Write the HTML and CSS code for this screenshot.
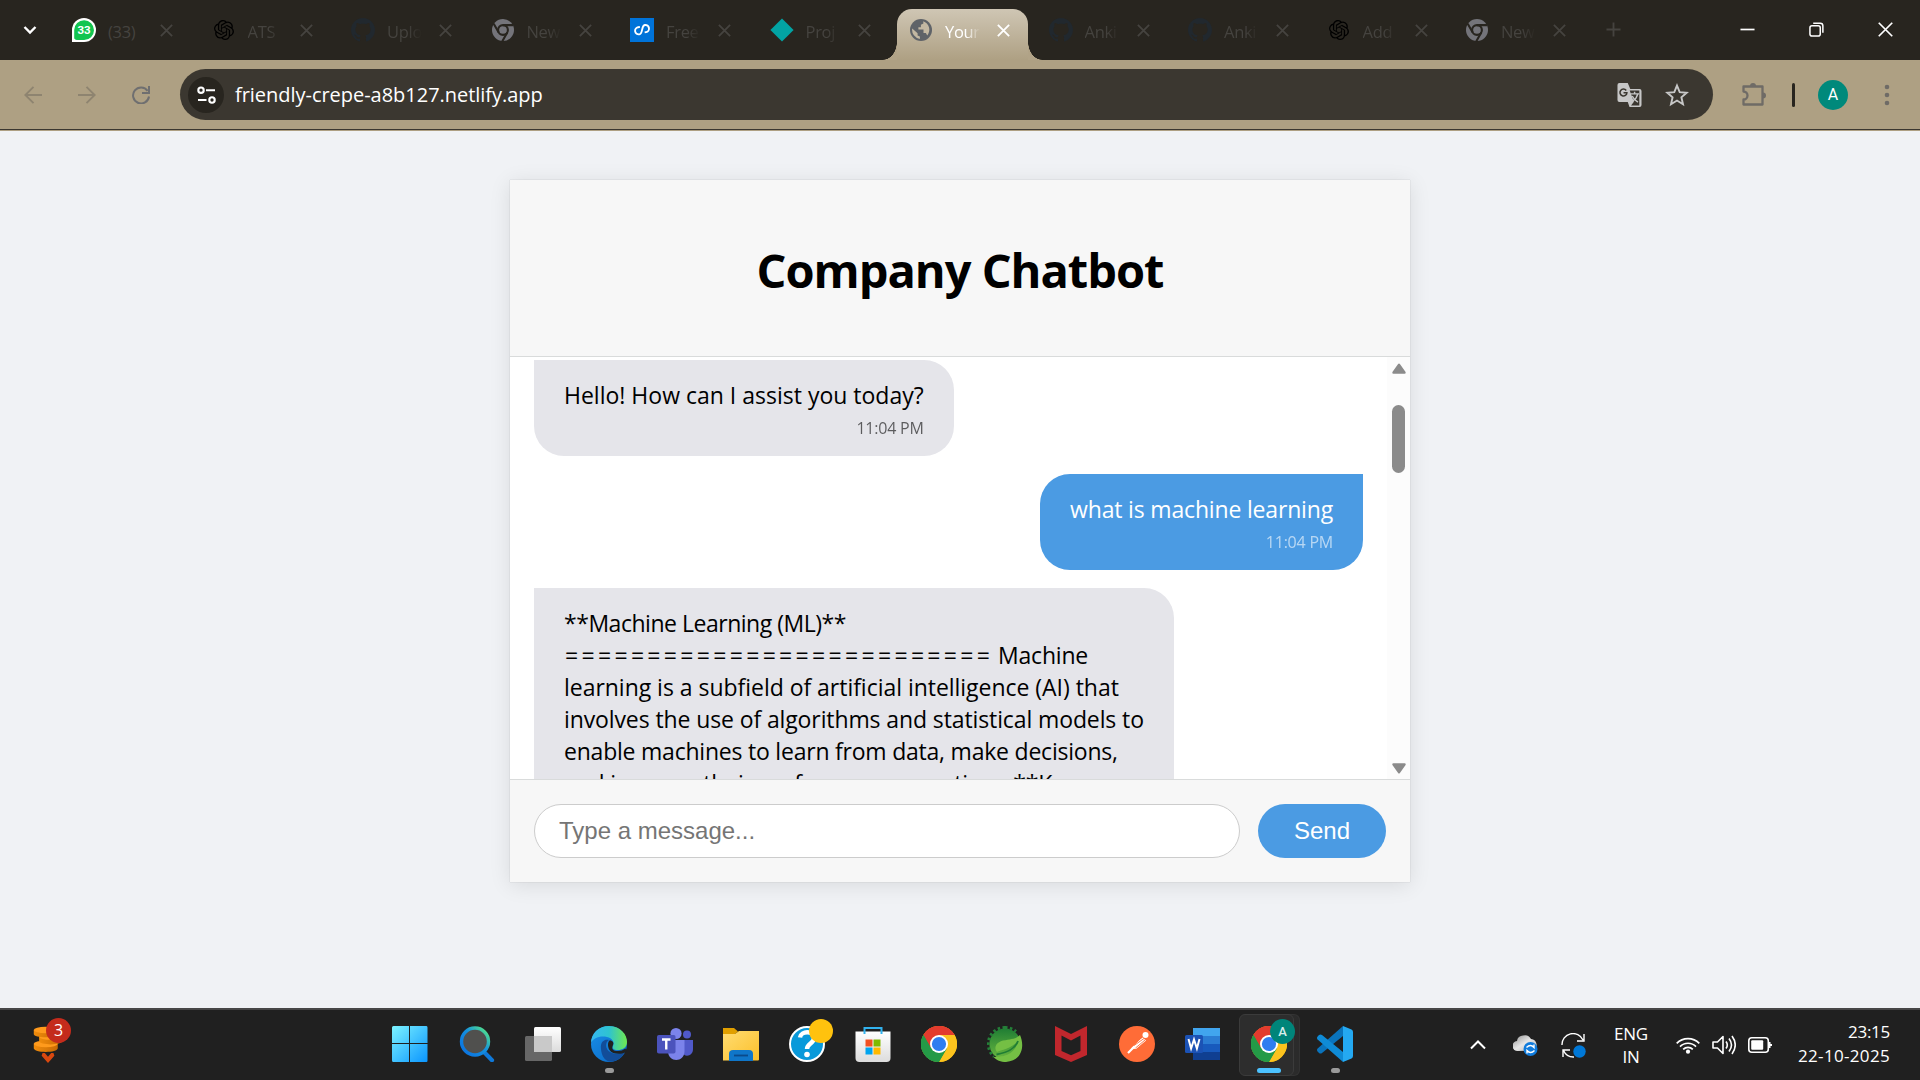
FILE: index.html
```html
<!DOCTYPE html>
<html lang="en">
<head>
<meta charset="utf-8">
<title>Your Chatbot</title>
<link rel="stylesheet" href="styles.css">
</head>
<body>
<svg class="defs" aria-hidden="true">
  <defs>
    <symbol id="x" viewBox="0 0 12 12"><path d="M.8.8l10.4 10.4M11.2.8L.8 11.2" fill="none" stroke="currentColor" stroke-width="1.7"/></symbol>
    <symbol id="openai" viewBox="0 0 24 24"><path d="M22.2819 9.8211a5.9847 5.9847 0 0 0-.5157-4.9108 6.0462 6.0462 0 0 0-6.5098-2.9A6.0651 6.0651 0 0 0 4.9807 4.1818a5.9847 5.9847 0 0 0-3.9977 2.9 6.0462 6.0462 0 0 0 .7427 7.0966 5.98 5.98 0 0 0 .511 4.9107 6.051 6.051 0 0 0 6.5146 2.9001A5.9847 5.9847 0 0 0 13.2599 24a6.0557 6.0557 0 0 0 5.7718-4.2058 5.9894 5.9894 0 0 0 3.9977-2.9001 6.0557 6.0557 0 0 0-.7475-7.0729zm-9.022 12.6081a4.4755 4.4755 0 0 1-2.8764-1.0408l.1419-.0804 4.7783-2.7582a.7948.7948 0 0 0 .3927-.6813v-6.7369l2.02 1.1686a.071.071 0 0 1 .038.052v5.5826a4.504 4.504 0 0 1-4.4945 4.4944zm-9.6607-4.1254a4.4708 4.4708 0 0 1-.5346-3.0137l.142.0852 4.783 2.7582a.7712.7712 0 0 0 .7806 0l5.8428-3.3685v2.3324a.0804.0804 0 0 1-.0332.0615L9.74 19.9502a4.4992 4.4992 0 0 1-6.1408-1.6464zM2.3408 7.8956a4.485 4.485 0 0 1 2.3655-1.9728V11.6a.7664.7664 0 0 0 .3879.6765l5.8144 3.3543-2.0201 1.1685a.0757.0757 0 0 1-.071 0l-4.8303-2.7865A4.504 4.504 0 0 1 2.3408 7.872zm16.5963 3.8558L13.1038 8.364 15.1192 7.2a.0757.0757 0 0 1 .071 0l4.8303 2.7913a4.4944 4.4944 0 0 1-.6765 8.1042v-5.6772a.79.79 0 0 0-.407-.667zm2.0107-3.0231l-.142-.0852-4.7735-2.7818a.7759.7759 0 0 0-.7854 0L9.409 9.2297V6.8974a.0662.0662 0 0 1 .0284-.0615l4.8303-2.7866a4.4992 4.4992 0 0 1 6.6802 4.66zM8.3065 12.863l-2.02-1.1638a.0804.0804 0 0 1-.038-.0567V6.0742a4.4992 4.4992 0 0 1 7.3757-3.4537l-.142.0805L8.704 5.459a.7948.7948 0 0 0-.3927.6813zm1.0976-2.3654l2.602-1.4998 2.6069 1.4998v2.9994l-2.5974 1.4997-2.6067-1.4997Z" fill="#000"/></symbol>
    <symbol id="github" viewBox="0 0 16 16"><path d="M8 0C3.58 0 0 3.58 0 8c0 3.54 2.29 6.53 5.47 7.59.4.07.55-.17.55-.38 0-.19-.01-.82-.01-1.49-2.01.37-2.53-.49-2.69-.94-.09-.23-.48-.94-.82-1.13-.28-.15-.68-.52-.01-.53.63-.01 1.08.58 1.23.82.72 1.21 1.87.87 2.33.66.07-.52.28-.87.51-1.07-1.78-.2-3.64-.89-3.64-3.95 0-.87.31-1.59.82-2.15-.08-.2-.36-1.02.08-2.12 0 0 .67-.21 2.2.82.64-.18 1.32-.27 2-.27s1.36.09 2 .27c1.53-1.04 2.2-.82 2.2-.82.44 1.1.16 1.92.08 2.12.51.56.82 1.27.82 2.15 0 3.07-1.87 3.75-3.65 3.95.29.25.54.73.54 1.48 0 1.07-.01 1.93-.01 2.2 0 .21.15.46.55.38A8.01 8.01 0 0 0 16 8c0-4.42-3.58-8-8-8z" fill="#21282e"/></symbol>
    <symbol id="chrome-gray" viewBox="0 0 24 24"><circle cx="12" cy="12" r="11" fill="#74747a"/><circle cx="12" cy="12" r="4.9" fill="none" stroke="#28251f" stroke-width="2.1"/><path d="M12 7.1h10M7.7 14.5L2.7 5.8M16.3 14.5l-5 8.8" stroke="#28251f" stroke-width="2.1"/></symbol>
    <symbol id="chrome" viewBox="0 0 36 36"><circle cx="18" cy="18" r="18" fill="#fbbc05"/><path d="M18 18L2.4 9A18 18 0 0 1 33.6 9z" fill="#e33b2e"/><path d="M18 18L2.4 9a18 18 0 0 0 15.6 27l7.8-13.5z" fill="#249a47"/><path d="M18 9h15.6A18 18 0 0 1 18 36l7.8-13.5z" fill="#fcc31e"/><path d="M2.4 9A18 18 0 0 1 33.6 9H18l-7.8 13.5z" fill="#e33b2e"/><path d="M2.4 9l7.8 13.5L18 27l7.8-4.5L18 36A18 18 0 0 1 2.4 9z" fill="#249a47"/><circle cx="18" cy="18" r="9" fill="#fff"/><circle cx="18" cy="18" r="7.1" fill="#2f7df0"/></symbol>
    <linearGradient id="win" x2="1" y2="1"><stop stop-color="#7cf3ff"/><stop offset="1" stop-color="#0a95ff"/></linearGradient>
    <linearGradient id="lens" x1="0" y1="1" x2="1" y2="0"><stop stop-color="#0a6fe0"/><stop offset=".55" stop-color="#1490df"/><stop offset="1" stop-color="#5df07a"/></linearGradient>
    <linearGradient id="edgeTop"><stop stop-color="#35b8f2"/><stop offset=".5" stop-color="#2ec3d0"/><stop offset="1" stop-color="#6fe84f"/></linearGradient>
    <linearGradient id="edgeLow" x2="1" y2="1"><stop stop-color="#1a8fe8"/><stop offset="1" stop-color="#0867c4"/></linearGradient>
    <linearGradient id="folder" x2="1" y2="1"><stop stop-color="#ffdc72"/><stop offset="1" stop-color="#fcc02a"/></linearGradient>
    <linearGradient id="paper" x2="0" y2="1"><stop stop-color="#fff"/><stop offset="1" stop-color="#dcdcdc"/></linearGradient>
    <linearGradient id="leaf" x2="0" y2="1"><stop stop-color="#1f7d34"/><stop offset="1" stop-color="#6bb83f"/></linearGradient>
    <linearGradient id="coin"><stop stop-color="#f08c0c"/><stop offset="1" stop-color="#c76a04"/></linearGradient>
    <linearGradient id="cloud" x2="1" y2="1"><stop stop-color="#8f8f8f"/><stop offset=".5" stop-color="#e6e6e6"/><stop offset="1" stop-color="#b0b0b0"/></linearGradient>
  </defs>
</svg>

<header class="tabstrip">
  <svg class="tab-search" viewBox="0 0 14 10"><path d="M1.5 2L7 7.5 12.5 2" fill="none" stroke="#fff" stroke-width="2.4"/></svg>
  <div class="tabs">
    <div class="tab"><svg class="fav" viewBox="0 0 24 24"><path d="M0 24V12A12 12 0 1 1 12 24z" fill="#fff"/><path d="M2.2 21.8V12A9.9 9.9 0 1 1 12 22H6z" fill="#12c550"/><path d="M0 24l1-4.5 4 3.4z" fill="#fff"/><text x="12" y="16.2" text-anchor="middle" class="fav-count">33</text></svg><span class="tab-title">(33)</span><svg class="close"><use href="#x"/></svg></div>
    <div class="tab"><svg class="fav small"><use href="#openai"/></svg><span class="tab-title">ATS</span><svg class="close"><use href="#x"/></svg></div>
    <div class="tab"><svg class="fav"><use href="#github"/></svg><span class="tab-title">Uplo</span><svg class="close"><use href="#x"/></svg></div>
    <div class="tab"><svg class="fav"><use href="#chrome-gray"/></svg><span class="tab-title">New</span><svg class="close"><use href="#x"/></svg></div>
    <div class="tab"><svg class="fav" viewBox="0 0 24 24"><path d="M0 0h24v24H0z" fill="#0073d9"/><path d="M10.5 8.6H8.6a3.600 3.600 0 0 0 0 7.200c3.900 0 3.300-8.200 7-8.200a3.600 3.600 0 0 1 0 7.200h-1.400" fill="none" stroke="#fff" stroke-width="1.900" transform="rotate(-10 12 12)"/></svg><span class="tab-title">Free</span><svg class="close"><use href="#x"/></svg></div>
    <div class="tab"><svg class="fav" viewBox="0 0 24 24"><path d="M12 .4L23.6 12 12 23.6.4 12z" fill="#02a3a3"/></svg><span class="tab-title">Proj</span><svg class="close"><use href="#x"/></svg></div>
    <div class="tab active"><svg class="fav" viewBox="0 0 24 24"><circle cx="12" cy="12" r="11" fill="#5f6368"/><path d="M14.2 3.2l.2 2.3-2.5 1.3v2.4H9.4v2.3h5.1v3.4h2.4l1.3 2.6A9 9 0 0 0 14.2 3.2zM3.2 10.6l5.4 4.7v2.1l2.3 1.2v2.3a9 9 0 0 1-7.7-10.3z" fill="#c3b8a2"/></svg><span class="tab-title">Your</span><svg class="close"><use href="#x"/></svg></div>
    <div class="tab"><svg class="fav"><use href="#github"/></svg><span class="tab-title">Anki</span><svg class="close"><use href="#x"/></svg></div>
    <div class="tab"><svg class="fav"><use href="#github"/></svg><span class="tab-title">Anki</span><svg class="close"><use href="#x"/></svg></div>
    <div class="tab"><svg class="fav small"><use href="#openai"/></svg><span class="tab-title">Add</span><svg class="close"><use href="#x"/></svg></div>
    <div class="tab"><svg class="fav"><use href="#chrome-gray"/></svg><span class="tab-title">New</span><svg class="close"><use href="#x"/></svg></div>
  </div>
  <svg class="new-tab" viewBox="0 0 16 16"><path d="M8 .5v15M.5 8h15" stroke="#45433f" stroke-width="2"/></svg>
  <div class="window-controls">
    <svg viewBox="0 0 16 16"><path d="M.5 8h15" stroke="#fff" stroke-width="1.8"/></svg>
    <svg viewBox="0 0 16 16"><rect x="1" y="4" width="11" height="11" rx="2.2" fill="none" stroke="#fff" stroke-width="1.6"/><path d="M4.5 1.3H12a2.8 2.8 0 0 1 2.8 2.8v7.4" fill="none" stroke="#fff" stroke-width="1.6"/></svg>
    <svg viewBox="0 0 16 16"><path d="M.8.8l14.4 14.4M15.2.8L.8 15.2" stroke="#fff" stroke-width="1.8"/></svg>
  </div>
</header>

<nav class="toolbar">
  <div class="nav-buttons">
    <svg viewBox="0 0 18 18"><path d="M18 9H1.5M9.5.8L1.3 9l8.2 8.2" fill="none" stroke="#8e8470" stroke-width="1.9"/></svg>
    <svg viewBox="0 0 18 18"><path d="M0 9h16.5M8.5.8L16.7 9l-8.2 8.2" fill="none" stroke="#8e8470" stroke-width="1.9"/></svg>
    <svg viewBox="0 0 18 18"><path d="M15.6 4.8A8 8 0 1 0 17 10.5" fill="none" stroke="#6f6f70" stroke-width="2"/><path d="M17 0v7h-7" fill="none" stroke="#6f6f70" stroke-width="2"/></svg>
  </div>
  <div class="address">
    <span class="site-info"><svg viewBox="0 0 19 18"><g fill="none" stroke="#fff" stroke-width="2.1"><circle cx="4" cy="4.2" r="2.7"/><path d="M9 4.2h9M1 14h8.5"/><circle cx="15" cy="14" r="2.7"/></g></svg></span>
    <span class="url">friendly-crepe-a8b127.netlify.app</span>
    <svg class="translate" viewBox="0 0 26 26"><path d="M2.500.5h8.700l2.600 6.300h9.700a2 2 0 0 1 2 2v14.700a2 2 0 0 1-2 2H13l-1.800-5.200H2.500a2 2 0 0 1-2-2V2.500a2 2 0 0 1 2-2z" fill="#c7c7c7"/><path d="M13.200 8.200h10v15.600h-8.600l3-3.700z" fill="#3b3730"/><path d="M14 11.800h9M18.300 9.500v2.300M21.500 12c-.8 3.500-2.700 5.600-5 7M15.800 14c1.500 3.300 3.500 5 6 6.500" fill="none" stroke="#c7c7c7" stroke-width="1.500"/><path d="M9.600 8.300A3.600 3.600 0 1 0 10.300 10.600H6.800" fill="none" stroke="#3b3730" stroke-width="1.600"/></svg>
    <svg class="star" viewBox="0 0 24 24"><path d="M12 2.600l2.700 6.500 7 .6-5.300 4.600 1.600 6.900-6-3.700-6 3.700 1.600-6.900-5.300-4.600 7-.6z" fill="none" stroke="#c7c7c7" stroke-width="1.900"/></svg>
  </div>
  <svg class="puzzle" viewBox="0 0 26 26"><path d="M2.500 4.500h19v18h-19v-5a4 4 0 0 0 0-8z" fill="none" stroke="#6f6b66" stroke-width="2.300" stroke-linejoin="round"/><path d="M9 4a3 3 0 0 1 6 0zM22 10.500a3 3 0 0 1 0 6z" fill="#6f6b66"/></svg>
  <span class="divider"></span>
  <span class="avatar">A</span>
  <svg class="kebab" viewBox="0 0 6 22"><circle cx="3" cy="3" r="2.300"/><circle cx="3" cy="11" r="2.300"/><circle cx="3" cy="19" r="2.300"/></svg>
</nav>

<main class="page">
  <section class="chat">
    <h1 class="chat-title">Company Chatbot</h1>
    <div class="chat-body">
      <div class="messages">
        <article class="message bot"><p>Hello! How can I assist you today?</p><time>11:04 PM</time></article>
        <article class="message user"><p class="t18">what is machine learning</p><time>11:04 PM</time></article>
        <article class="message bot long">
          <p class="t48">**Machine Learning (ML)**</p>
          <p class="t20"><span class="rule">==========================</span> Machine</p>
          <p class="t03">learning is a subfield of artificial intelligence (AI) that</p>
          <p class="t12">involves the use of algorithms and statistical models to</p>
          <p class="t22">enable machines to learn from data, make decisions,</p>
          <p class="t20">and improve their performance over time. **Key</p>
        </article>
      </div>
      <div class="scrollbar">
        <svg viewBox="0 0 14 11"><path d="M6.100 1.100L.6 8.700q-1 2 .9 2h11q1.900 0 .9-2L7.900 1.100q-.9-1.200-1.800 0z"/></svg>
        <span class="thumb"></span>
        <svg class="down" viewBox="0 0 14 11"><path d="M6.100 1.100L.6 8.700q-1 2 .9 2h11q1.900 0 .9-2L7.900 1.100q-.9-1.200-1.800 0z"/></svg>
      </div>
    </div>
    <form class="composer">
      <input type="text" placeholder="Type a message...">
      <button type="button">Send</button>
    </form>
  </section>
</main>

<footer class="taskbar">
  <div class="widget">
    <svg viewBox="0 0 34 36"><g fill="url(#coin)"><path d="M1 24.500v5c0 5.500 27 5.500 27 0v-5z"/><ellipse cx="14.500" cy="24.500" rx="13.500" ry="3.800" fill="#ff9a1c"/><path d="M7 16.500v5c0 5 26 5 26 0v-5z"/><ellipse cx="20" cy="16.500" rx="13" ry="3.600" fill="#ff9a1c"/><path d="M1 9v4.500c0 5 26 5 26 0V9z"/><ellipse cx="14" cy="9" rx="13" ry="3.600" fill="#ff9a1c"/></g></svg>
    <svg class="down-mark" viewBox="0 0 14 11"><path d="M1 0h2.500L7 4l3.500-4H13l1 3-7 8-7-8z" fill="#d9480f"/></svg>
    <span class="count">3</span>
  </div>

  <div class="apps">
    <div class="app"><svg viewBox="0 0 36 36"><path d="M1.500 0H17v17H0V1.500A1.500 1.500 0 0 1 1.500 0zM18 0h16.500q1 0 1 1.500V17H18zM0 18h17v18H1.500Q0 36 0 34.500zM18 18h17.500v16.500q0 1.500-1 1.500H18z" fill="url(#win)"/></svg></div>
    <div class="app"><svg viewBox="0 0 36 36"><path d="M26 27l7 7.200" stroke="#0f78d8" stroke-width="4.200" stroke-linecap="round"/><circle cx="16" cy="15.500" r="13.500" fill="#50504e" stroke="url(#lens)" stroke-width="3.400"/></svg></div>
    <div class="app"><svg viewBox="0 0 36 36"><rect x="9" y="1" width="27" height="25" rx="1.500" fill="url(#paper)"/><rect y="10" width="27" height="25" rx="1.500" fill="#777" fill-opacity=".82"/><path d="M9 10h18v16H9z" fill="#c9c9c9"/></svg></div>
    <div class="app running"><svg viewBox="0 0 36 36"><circle cx="18" cy="18" r="18" fill="url(#edgeLow)"/><path d="M10 23C9 15 14 13 18 14c-4 2-4 9 1 12 5 3 10 2 14.500 0C31 33 24 36 18 35.500 13 34 10.500 29 10 23z" fill="#124d99"/><path d="M0 17C0 7 8 0 18 0c12 0 18 9 18 16 0 6-5 8-9 8-5 0-6-2-5-4 2-4-1-8-6-9C9 9.500 2 12 0 17z" fill="url(#edgeTop)"/><path d="M22 19c-2 4 0 6 5 6 3 0 5-.8 7.500-2.500l1.500 3-1.800 1C29 29 21 28 18.500 24 16 20 17 15 19 14.300 22 15 23 17 22 19z" fill="#202020"/></svg></div>
    <div class="app"><svg viewBox="0 0 36 36"><circle cx="30" cy="8.500" r="4" fill="#5059c9"/><path d="M26 14h10v9c0 8-10 9-11 2z" fill="#5059c9"/><circle cx="19" cy="7.500" r="5.600" fill="#7b83eb"/><path d="M11 14h16.500v11c0 12-16.500 12-16.500 0z" fill="#7b83eb"/><rect y="9" width="18.500" height="18.500" rx="1.800" fill="#4b53bc"/><path d="M5 13.500h8.500M9.250 13.500v10" stroke="#fff" stroke-width="2.400"/></svg></div>
    <div class="app"><svg viewBox="0 0 36 36"><path d="M0 2h11l4 3.500L11 9H0z" fill="#e09f00"/><path d="M0 8h12l4-3h20v28.500a1 1 0 0 1-1 1H0z" fill="url(#folder)"/><path d="M6 35v-7a4 4 0 0 1 4-4h16a4 4 0 0 1 4 4v7z" fill="#0f76c9"/><path d="M11 29.500h14" stroke="#0a4a8a" stroke-width="1.800"/></svg></div>
    <div class="app"><svg viewBox="0 0 36 36"><circle cx="18" cy="18" r="17" fill="#0899da" stroke="#fff" stroke-width="2"/><path d="M11 11.500c1-7 14-7 14 .5 0 5.500-7 5.500-7 11" fill="none" stroke="#fff" stroke-width="4.400"/><circle cx="18" cy="28.500" r="2.800" fill="#fff"/></svg><span class="badge yellow"></span></div>
    <div class="app"><svg viewBox="0 0 36 36"><path d="M.5 5.500h35V32a4 4 0 0 1-4 4h-27a4 4 0 0 1-4-4z" fill="url(#paper)"/><path d="M9.500 8V2h17v6" fill="none" stroke="#31b2ee" stroke-width="2"/><path d="M10.500 13.500h7v7h-7z" fill="#f25022"/><path d="M18.500 13.500h7v7h-7z" fill="#7fba00"/><path d="M10.500 21.500h7v7h-7z" fill="#00a4ef"/><path d="M18.500 21.500h7v7h-7z" fill="#ffb900"/></svg></div>
    <div class="app"><svg><use href="#chrome"/></svg></div>
    <div class="app"><svg viewBox="0 0 36 36"><circle cx="18" cy="18" r="15.600" fill="url(#leaf)"/><path d="M18 1.500A16.500 16.500 0 0 0 7 30.500M18 1.500a16.500 16.500 0 0 1 11 4" fill="none" stroke="#247f38" stroke-width="3" stroke-dasharray="2.500 2.400"/><path d="M33 9c5 11 2 26-14 27-5 0-10-2-12.500-5C14 31 28 30 31 15 24 23 14 24 10 26c-4-5 0-10 6-11.500C24 13 29 13 33 9z" fill="#74bf44"/><path d="M9.500 28.500C18 27 28 24 31 15" stroke="#1f7d34" stroke-width="1.800" fill="none"/></svg></div>
    <div class="app"><svg viewBox="0 0 36 36"><path d="M2 0l16 8L34 0v29l-16 7-16-7zM8.500 9.500V25l9.500 4.300 9.500-4.300V9.500L18 14.500z" fill="#c1272d" fill-rule="evenodd"/></svg></div>
    <div class="app"><svg viewBox="0 0 36 36"><circle cx="18" cy="18" r="18" fill="#ff6c37"/><circle cx="26.500" cy="9" r="3" fill="#fff"/><path d="M23.500 11.500l3.500 3-10 8.500-5-.5z" fill="#fff"/><path d="M15 21l-6 6M23 13.500L13.500 22.500" stroke="#fff" stroke-width="2.200"/><path d="M15 19.500l10-7M16.500 22l9.500-8" stroke="#ff6c37" stroke-width=".9"/></svg></div>
    <div class="app"><svg viewBox="0 0 36 36"><path d="M8 2h27v8.500H8z" fill="#41a5ee"/><path d="M8 10h27v8H8z" fill="#2b7cd3"/><path d="M8 18h27v8H8z" fill="#185abd"/><path d="M8 26h27v8H8z" fill="#103f91"/><rect y="9" width="18" height="18" rx="1.500" fill="#1b52b5"/><path d="M3.500 13l2.600 9.500L9 13.500l2.900 9L14.500 13" fill="none" stroke="#fff" stroke-width="2"/></svg></div>
    <div class="app current"><svg><use href="#chrome"/></svg><span class="badge profile">A</span></div>
    <div class="app running"><svg viewBox="0 0 36 36"><path d="M26 0v10L5 27q-1.500 1-3 0L.6 25.500q-1.200-1.500 0-3z" fill="#0a74bd"/><path d="M26 36V26L5 9Q3.500 8 2 9L.6 10.500q-1.200 1.500 0 3z" fill="#0f8bd6"/><path d="M26 0l8.500 3.500Q36 4.200 36 6v24q0 1.800-1.500 2.500L26 36z" fill="#24a9f2"/></svg></div>
  </div>

  <div class="tray">
    <svg class="chevron" viewBox="0 0 16 10"><path d="M1 8.500L8 1.500l7 7" fill="none" stroke="#fff" stroke-width="2"/></svg>
    <svg class="cloud" viewBox="0 0 25 22"><path d="M5 17a5 5 0 0 1-1-10 6 6 0 0 1 6-5.500A7 7 0 0 1 18 5a6 6 0 0 1 2 11.500z" fill="url(#cloud)"/><circle cx="17.500" cy="15" r="7" fill="#0f7bdc"/><path d="M13.500 13.500q4-4 7.500 0v-3M21.500 16.500q-4 4-7.500 0v3" fill="none" stroke="#fff" stroke-width="1.400"/></svg>
    <svg class="sync" viewBox="0 0 25 25"><path d="M1 12A11 11 0 0 1 22 7M23 1v7h-7M13 24A11 11 0 0 1 2.500 17.500M2 24v-7h7" fill="none" stroke="#fff" stroke-width="1.400"/><circle cx="18.500" cy="18.500" r="6.200" fill="#0078d7"/></svg>
    <div class="lang">ENG<br>IN</div>
    <svg class="wifi" viewBox="0 0 24 18"><g fill="none" stroke="#fff" stroke-width="1.700"><path d="M.7 7.400a15.700 15.700 0 0 1 22.600 0M4 10.600a11.200 11.200 0 0 1 16 0M7.200 13.400a6.800 6.800 0 0 1 9.600 0"/></g><circle cx="12" cy="15.700" r="2.100" fill="#fff"/></svg>
    <svg class="volume" viewBox="0 0 24 20"><g fill="none" stroke="#fff" stroke-width="1.600" stroke-linejoin="round"><path d="M1 7h4.500L11 1.500v17L5.500 13H1z"/><path d="M14 6.500q2.600 3.500 0 7M17 3.500q5 6.500 0 13M20 1q6.500 9 0 18"/></g></svg>
    <svg class="battery" viewBox="0 0 24 16"><rect x=".8" y=".8" width="19.500" height="14.400" rx="3" fill="none" stroke="#fff" stroke-width="1.600"/><rect x="3.200" y="3.200" width="12" height="9.600" rx="1" fill="#fff"/><path d="M21.500 5v6M21.500 8H24" stroke="#fff" stroke-width="2"/></svg>
    <div class="clock"><span>23:15</span><span class="date">22-10-2025</span></div>
  </div>
</footer>
</body>
</html>
```
FILE: styles.css
```css
* { box-sizing: border-box; }

body {
  margin: 0;
  width: 1920px;
  height: 1080px;
  display: flex;
  flex-direction: column;
  overflow: hidden;
  font-family: "Open Sans", "Noto Sans", sans-serif;
}

svg { display: block; flex: none; }
p, h1 { margin: 0; }
.defs { position: absolute; width: 0; height: 0; }

/* Tab strip */
.tabstrip { height: 60px; flex: none; display: flex; align-items: center; background: #28251f; }
.tab-search { width: 14px; height: 10px; margin: 0 23px; }
.tabs { display: flex; align-self: stretch; }
.tab {
  width: 139.5px;
  height: 51px;
  margin-top: 9px;
  padding-left: 12px;
  display: flex;
  align-items: center;
  color: #45433f;
  position: relative;
}
.tab:nth-child(9), .tab:nth-child(10) { width: 138.5px; }
.fav { width: 24px; height: 24px; margin-top: -9px; }
.fav.small { width: 20px; height: 20px; margin-left: 2px; margin-right: 2px; }
.fav-count { font: bold 11.5px Roboto, sans-serif; fill: #fff; }
.tab-title {
  width: 38px;
  margin: -7px 14px 0 12px;
  overflow: hidden;
  white-space: nowrap;
  font-size: 16.5px;
  letter-spacing: -.3px;
  -webkit-mask-image: linear-gradient(90deg, #000 55%, transparent 92%);
  mask-image: linear-gradient(90deg, #000 55%, transparent 92%);
}
.tab:first-child .tab-title { -webkit-mask-image: none; mask-image: none; }
.close { width: 13px; height: 13px; margin-top: -9px; }
.tab.active {
  width: 131px;
  margin-right: 8.5px;
  border-radius: 15px 15px 0 0;
  background: linear-gradient(#cfc6b4, #aea083);
  color: #fff;
}
.tab.active::before, .tab.active::after {
  content: "";
  position: absolute;
  bottom: 0;
  width: 14px;
  height: 18px;
}
.tab.active::before { left: -14px; background: radial-gradient(ellipse 14px 18px at 0 0, transparent 97%, #b1a387 100%); }
.tab.active::after { right: -14px; background: radial-gradient(ellipse 14px 18px at 100% 0, transparent 97%, #b1a387 100%); }
.new-tab { width: 15px; height: 15px; margin: -1px 0 0 13px; }
.window-controls { margin: -1px 27px 0 auto; display: flex; gap: 54px; }
.window-controls svg { width: 15px; height: 15px; }

/* Toolbar */
.toolbar {
  height: 71px;
  flex: none;
  padding: 0 0 2px 24px;
  display: flex;
  align-items: center;
  background: linear-gradient(#aea083 69px, #3b3730 69px, #3b3730 70px, #aea083 70px);
}
.nav-buttons { display: flex; gap: 36px; }
.nav-buttons svg { width: 18px; height: 18px; }
.address {
  width: 1533px;
  height: 51px;
  flex: none;
  margin-left: 30px;
  padding: 0 24px 0 8px;
  display: flex;
  align-items: center;
  border-radius: 26px;
  background: #3b3730;
}
.site-info { width: 36px; height: 36px; display: grid; place-items: center; border-radius: 50%; background: #28251f; }
.site-info svg { width: 19px; height: 18px; }
.url { margin: -1px auto 0 11px; color: #fff; font-size: 20px; letter-spacing: -.03px; }
.translate { width: 25px; height: 26px; margin-right: 23px; }
.star { width: 24px; height: 24px; }
.puzzle { width: 26px; height: 26px; margin: 0 25px 0 28px; }
.divider { width: 3px; height: 24px; border-radius: 2px; background: #28251f; }
.avatar {
  width: 30px;
  height: 30px;
  margin: 0 36px 0 23px;
  border-radius: 50%;
  background: #00897b;
  color: #fff;
  font: 16px/30px Roboto, sans-serif;
  text-align: center;
}
.kebab { width: 6px; height: 22px; fill: #6f6b66; }

/* Page */
.page { flex: 1; padding-top: 49px; background: #f0f2f5; }
.chat {
  width: 900px;
  height: 702px;
  margin: 0 auto;
  display: flex;
  flex-direction: column;
  background: #fff;
  box-shadow: 0 0 1px rgba(0, 20, 10, .22), 0 3px 20px rgba(0, 0, 0, .1);
}
.chat-title {
  height: 177px;
  padding-top: 5px;
  flex: none;
  border-bottom: 1px solid #d9dbdb;
  background: #f7f7f7;
  font-size: 47px;
  line-height: 170px;
  letter-spacing: -1px;
  text-align: center;
}
.chat-body { height: 422px; flex: none; display: flex; }
.messages {
  flex: 1;
  overflow: hidden;
  padding: 3px 24px 0;
  display: flex;
  flex-direction: column;
  gap: 18px;
}
.message {
  flex: none;
  padding: 19px 30px 16px;
  display: flex;
  flex-direction: column;
  font-size: 23px;
  line-height: 32px;
  white-space: nowrap;
}
.bot { align-self: flex-start; border-radius: 0 30px 30px 30px; background: #e5e5ea; color: #000; }
.user { align-self: flex-end; border-radius: 30px 0 30px 30px; background: #4b9be3; color: #fff; }
.long { width: 640px; }
.message time {
  margin-top: 5px;
  align-self: flex-end;
  font-size: 16px;
  line-height: 24px;
  letter-spacing: -.22px;
  opacity: .6;
}
.t03 { letter-spacing: -.03px; }
.t12 { letter-spacing: -.11px; }
.t18 { letter-spacing: -.17px; }
.t20 { letter-spacing: -.2px; }
.t22 { letter-spacing: -.22px; }
.t48 { letter-spacing: -.476px; }
.rule { margin-left: 1px; margin-right: -1px; letter-spacing: 3.32px; }

.scrollbar {
  width: 23px;
  padding: 6px 0 5px;
  display: flex;
  flex-direction: column;
  align-items: center;
  background: #fcfcfc;
  fill: #8b8b8b;
}
.scrollbar svg { width: 14px; height: 11px; }
.thumb { width: 13px; height: 68px; margin-top: 31px; border-radius: 7px; background: #8b8b8b; }
.scrollbar .down { margin-top: auto; transform: rotate(180deg); }

.composer {
  flex: 1;
  padding: 24px;
  display: flex;
  gap: 18px;
  border-top: 1px solid #d9dbdb;
  background: #f7f7f7;
}
.composer input, .composer button { height: 54px; border-radius: 27px; font: 24px "Liberation Sans", Arial, sans-serif; }
.composer input { flex: 1; min-width: 0; padding: 0 24px; border: 1px solid #ccc; background: #fff; }
.composer input::placeholder { color: #757575; }
.composer button { width: 128px; padding: 0; border: 0; background: #4b9be3; color: #fff; }

/* Taskbar */
.taskbar {
  height: 72px;
  flex: none;
  display: flex;
  border-top: 2px solid #474747;
  background: #202020;
  color: #fff;
}
.widget { width: 378px; padding: 12px 0 0 31px; position: relative; }
.widget > svg { width: 34px; height: 32px; }
.widget .down-mark { width: 14px; height: 10px; margin: -1px 0 0 10px; }
.count {
  position: absolute;
  left: 46px;
  top: 8px;
  width: 25px;
  height: 25px;
  border-radius: 50%;
  background: #c42b1c;
  font-size: 16px;
  line-height: 24px;
  text-align: center;
}
.apps { display: flex; }
.app { width: 66px; padding: 16px 15px 0; position: relative; }
.app:first-child > svg { margin-left: -1px; }
.app > svg { width: 36px; height: 36px; position: relative; }
.running::after, .current::after {
  content: "";
  position: absolute;
  left: 29px;
  bottom: 7px;
  width: 9px;
  height: 5px;
  border-radius: 3px;
  background: #9a9a9a;
}
.current::after { left: 21px; width: 24px; background: #4cc2ff; }
.current::before {
  content: "";
  position: absolute;
  left: 3px;
  top: 4px;
  width: 53px;
  height: 60px;
  border: 1px solid #3b3b3b;
  border-radius: 6px;
  background: #2d2d2d;
  box-shadow: 6px 0 0 -1px #2b2b2b, 6px 0 0 0 #333;
}
.badge { position: absolute; border-radius: 50%; }
.yellow { left: 35px; top: 9px; width: 24px; height: 24px; background: #ffc20e; }
.profile {
  left: 34px;
  top: 9px;
  width: 25px;
  height: 25px;
  background: #00857a;
  color: #d8eeeb;
  font: 500 13px/25px Roboto, sans-serif;
  text-align: center;
}

.tray {
  margin-left: auto;
  padding-right: 30px;
  display: flex;
  align-items: center;
  font-size: 17px;
  line-height: 23px;
}
.chevron { width: 16px; height: 10px; margin-top: -1px; }
.cloud { width: 25px; height: 22px; margin-left: 27px; }
.sync { width: 25px; height: 25px; margin-left: 23px; }
.lang { width: 50px; margin: -1px 0 0 20px; text-align: center; letter-spacing: -.2px; }
.wifi { width: 24px; height: 18px; margin: -1px 0 0 20px; }
.volume { width: 24px; height: 20px; margin: -1px 0 0 12px; }
.battery { width: 24px; height: 16px; margin: -1px 0 0 12px; }
.clock { width: 118px; display: flex; flex-direction: column; align-items: flex-end; line-height: 24px; letter-spacing: -.27px; margin-top: -3px; }
.date { letter-spacing: .33px; }
```
